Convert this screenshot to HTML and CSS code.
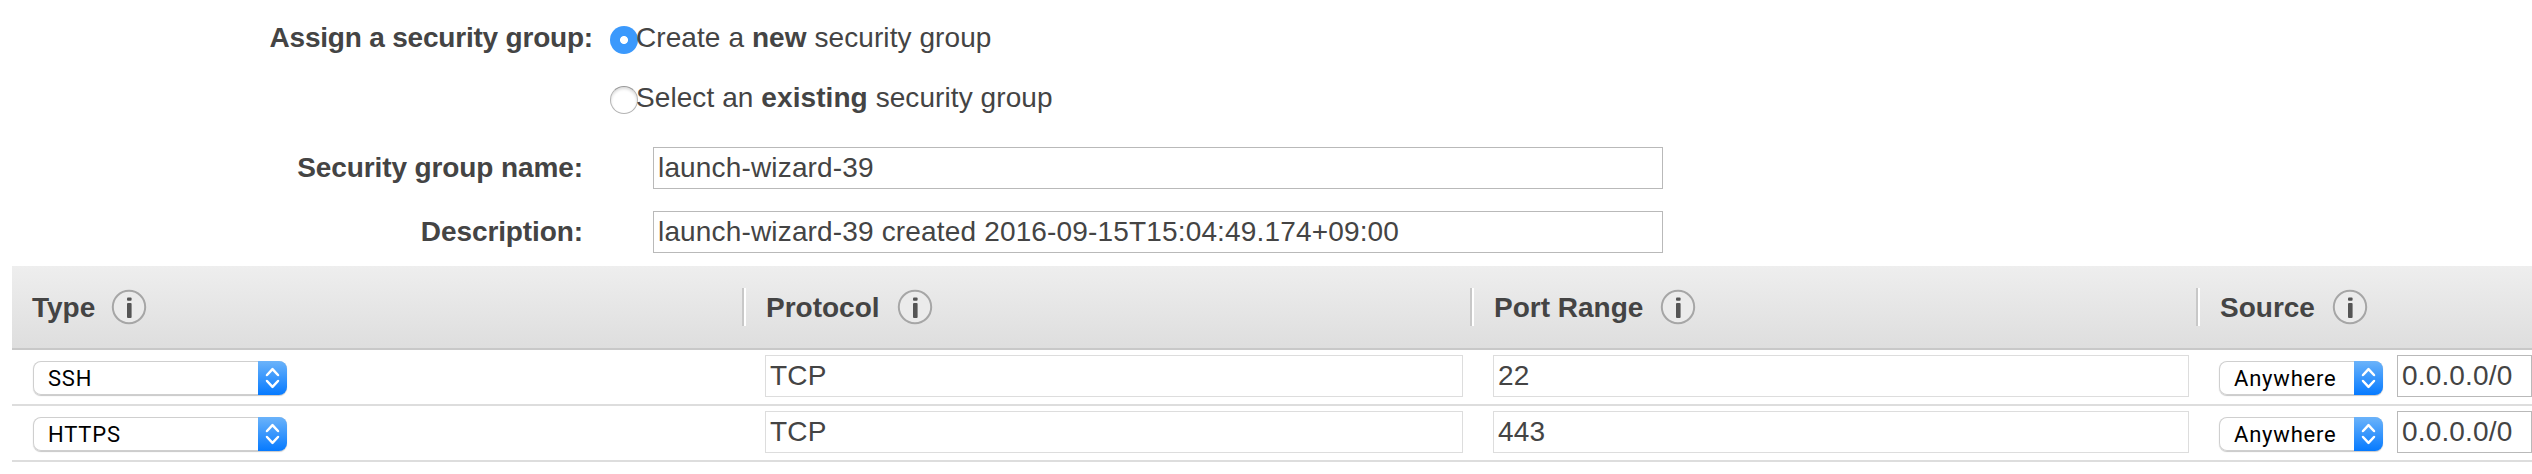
FILE: index.html
```html
<!DOCTYPE html>
<html lang="en">
<head>
<meta charset="utf-8">
<title>Security group</title>
<link rel="stylesheet" href="styles.css">
</head>
<body>
<svg class="defs" aria-hidden="true">
  <symbol id="info" viewBox="0 0 36 36">
    <circle cx="18" cy="18" r="16.2" fill="#ebebeb" stroke="#a6a6a6" stroke-width="2"/>
    <rect x="16" y="8.400" width="4.600" height="3.400" rx="1" fill="#555"/>
    <rect x="16" y="14" width="4.600" height="15" rx="1" fill="#555"/>
  </symbol>
  <symbol id="arrows" viewBox="0 0 29 34">
    <path d="M9 14 14.5 8.200 20 14M9 20 14.500 25.800 20 20" fill="none" stroke="#fff" stroke-width="2.500" stroke-linecap="round" stroke-linejoin="round"/>
  </symbol>
</svg>
<form class="form">
  <div class="row assign">
    <span class="label">Assign a security group:</span>
    <div class="options">
      <label class="option"><span class="radio checked"></span><span class="caption">Create a <b>new</b> security group</span></label>
      <label class="option"><span class="radio"></span><span class="caption">Select an <b>existing</b> security group</span></label>
    </div>
  </div>
  <div class="row field">
    <span class="label">Security group name:</span>
    <div class="input">launch-wizard-39</div>
  </div>
  <div class="row field">
    <span class="label">Description:</span>
    <div class="input">launch-wizard-39 created 2016-09-15T15:04:49.174+09:00</div>
  </div>
</form>
<div class="table">
  <div class="line head">
    <div class="th"><span class="title">Type</span><svg class="info"><use href="#info"/></svg></div>
    <div class="th"><span class="title">Protocol</span><svg class="info"><use href="#info"/></svg></div>
    <div class="th"><span class="title">Port Range</span><svg class="info"><use href="#info"/></svg></div>
    <div class="th"><span class="title">Source</span><svg class="info"><use href="#info"/></svg></div>
  </div>
  <div class="line">
    <div class="td"><div class="select type"><span class="value">SSH</span><svg class="arrows"><use href="#arrows"/></svg></div></div>
    <div class="td"><div class="input light">TCP</div></div>
    <div class="td"><div class="input light">22</div></div>
    <div class="td"><div class="select"><span class="value">Anywhere</span><svg class="arrows"><use href="#arrows"/></svg></div><div class="input">0.0.0.0/0</div></div>
  </div>
  <div class="line">
    <div class="td"><div class="select type"><span class="value">HTTPS</span><svg class="arrows"><use href="#arrows"/></svg></div></div>
    <div class="td"><div class="input light">TCP</div></div>
    <div class="td"><div class="input light">443</div></div>
    <div class="td"><div class="select"><span class="value">Anywhere</span><svg class="arrows"><use href="#arrows"/></svg></div><div class="input">0.0.0.0/0</div></div>
  </div>
</div>
</body>
</html>
```

FILE: styles.css
```css
* { box-sizing: border-box; }
body {
  margin: 0;
  height: 474px;
  overflow: hidden;
  background: #fff;
  color: #444;
  font: 28px/32px "Liberation Sans", Arial, sans-serif;
}
.defs { display: none; }
.form { margin: 0; height: 266px; padding-top: 22px; }
.row { display: flex; }
.label {
  flex: none;
  font-weight: 700;
  text-align: right;
  letter-spacing: -.1px;
  white-space: nowrap;
}
.assign .label { width: 593px; letter-spacing: -.2px; }
.options { display: grid; gap: 28px; margin-left: 17px; }
.option { display: flex; }
.radio {
  flex: none;
  width: 28px;
  height: 28px;
  margin-top: 4px;
  border-radius: 50%;
  border: 1px solid #b4b4b4;
  border-top-color: #999;
  background: #fff;
  box-shadow: inset 0 2px 3px rgba(0, 0, 0, .14);
}
.radio.checked {
  border: 0;
  background: radial-gradient(circle, #fff 3.600px, #3b99fc 4.400px);
  box-shadow: none;
}
.caption { margin-left: -2px; letter-spacing: .08px; white-space: nowrap; }
.field { height: 42px; align-items: center; margin-bottom: 22px; }
.assign + .field { margin-top: 33px; }
.field .label { width: 583px; }
.field .input { width: 1010px; margin-left: 70px; letter-spacing: .16px; }
.input {
  height: 42px;
  padding: 0 3px 0 4px;
  border: 1px solid #b9b9b9;
  background: #fff;
  line-height: 40px;
  letter-spacing: .16px;
  white-space: nowrap;
  overflow: hidden;
}
.input.light { border-color: #ddd; }

.table { margin-left: 12px; }
.line {
  display: grid;
  grid-template-columns: 730px 728px 726px 336px;
  height: 56px;
  border-bottom: 2px solid #ddd;
}
.head {
  height: 84px;
  align-items: start;
  padding-top: 22px;
  border-bottom-color: #c8c8c8;
  background: linear-gradient(#eee, #dedede);
}
.th {
  display: flex;
  align-items: center;
  height: 38px;
  padding-left: 22px;
  border-left: 2px solid #c8c8c8;
  box-shadow: inset 2px 0 #fff;
  font-weight: 700;
}
.th:first-child { border-left: 0; box-shadow: none; padding-left: 20px; }
.th:first-child .info { margin-left: 16px; }
.title { padding-top: 2px; }
.info { width: 36px; height: 36px; margin-left: 17px; }
.td { display: flex; padding: 5px 7px 0 23px; }
.td:first-child { padding-left: 21px; }
.td:last-child { padding-right: 0; }
.td .input { flex: 1; }
.select {
  display: flex;
  flex: none;
  width: 164px;
  height: 34px;
  margin: 6px 14px 0 0;
  border-radius: 8px;
  background: #fff;
  color: #000;
  font: 22px/35px Roboto, "Liberation Sans", sans-serif;
  box-shadow: inset 0 0 0 1px #cfcfcf, 0 1px 1px rgba(0, 0, 0, .22);
}
.select.type { width: 254px; margin-right: 0; }
.value { flex: 1; padding-left: 15px; letter-spacing: .8px; white-space: nowrap; }
.arrows {
  flex: none;
  width: 29px;
  height: 34px;
  border-radius: 0 8px 8px 0;
  background: linear-gradient(#6bb3fa, #067aff);
}
```
